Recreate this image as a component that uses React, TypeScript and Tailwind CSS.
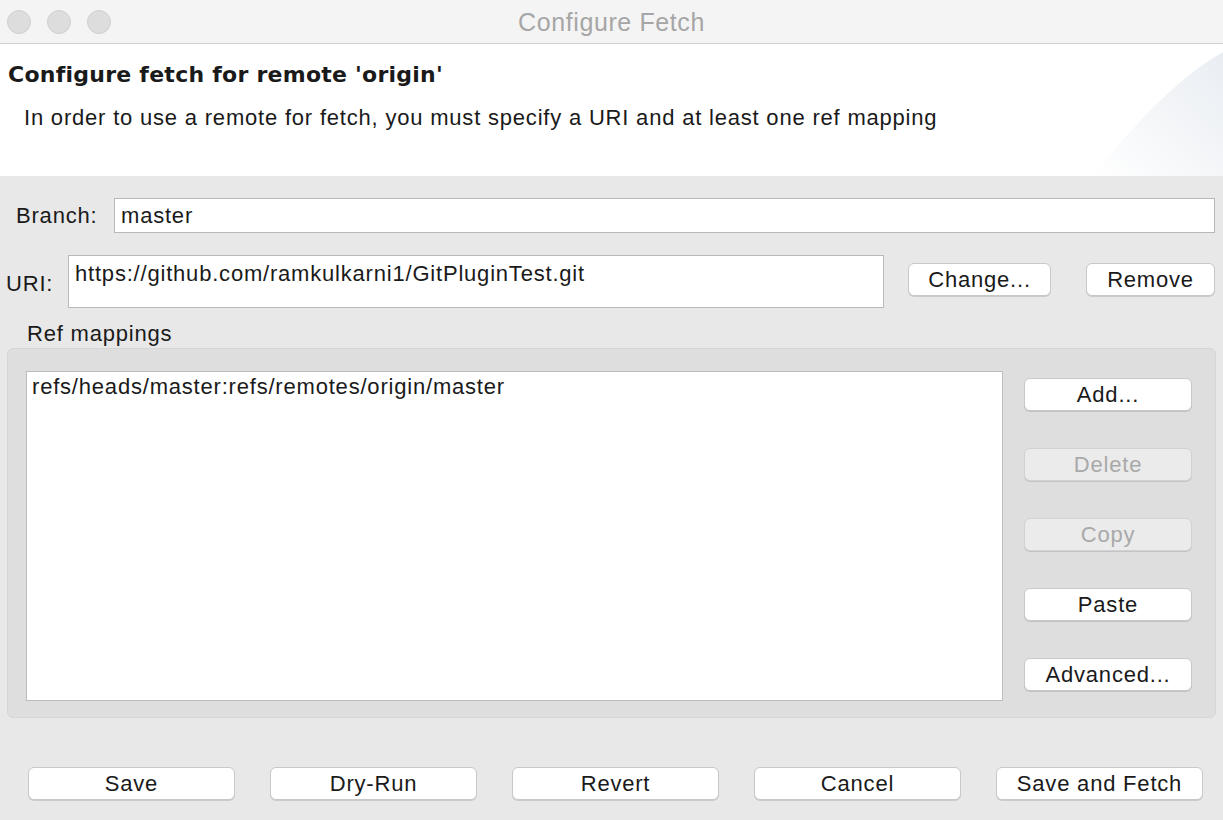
import React from 'react';

const font = { fontFamily: '"Liberation Sans", Arial, sans-serif' };

function MacButton({ label, disabled, className = '' }: { label: string; disabled?: boolean; className?: string }) {
  return (
    <button
      className={`h-[33px] rounded-[6px] border text-[22px] tracking-[0.8px] leading-none flex items-center justify-center shadow-[0_1px_0_rgba(0,0,0,0.12)] ${
        disabled
          ? 'border-[#d2d2d2] bg-[#ebebeb] text-[#a9a9a9]'
          : 'border-[#c8c8c8] bg-white text-[#1a1a1a]'
      } ${className}`}
    >
      {label}
    </button>
  );
}

export default function App() {
  return (
    <div className="w-[1223px] h-[820px] overflow-hidden bg-[#e8e8e8] text-[#1a1a1a] text-[22px] tracking-[0.8px]" style={font}>
      {/* title bar */}
      <div className="relative h-[44px] bg-[#f4f4f4] border-b border-[#cfcfcf] flex items-center justify-center">
        <div className="absolute left-[7px] top-[10px] flex gap-[16px]">
          <span className="w-[24px] h-[24px] rounded-full bg-[#dddddd] border border-[#d0d0d0]" />
          <span className="w-[24px] h-[24px] rounded-full bg-[#dddddd] border border-[#d0d0d0]" />
          <span className="w-[24px] h-[24px] rounded-full bg-[#dddddd] border border-[#d0d0d0]" />
        </div>
        <span className="text-[25px] tracking-[0.6px] text-[#a6a6a6] mt-[2px]">Configure Fetch</span>
      </div>

      {/* header */}
      <div className="relative h-[132px] bg-white overflow-hidden">
        <svg className="absolute right-0 top-0" width="130" height="132" viewBox="0 0 130 132">
          <defs>
            <linearGradient id="g" x1="0" y1="1" x2="1" y2="0">
              <stop offset="0" stopColor="#ffffff" />
              <stop offset="1" stopColor="#e9edf2" />
            </linearGradient>
          </defs>
          <path d="M0 132 C 40 80, 90 30, 130 8 L130 132 Z" fill="url(#g)" />
        </svg>
        <div
          className="relative pl-[8px] pt-[18px] text-[22px] tracking-[0.25px] font-bold leading-[26px]"
          style={{ fontFamily: '"DejaVu Sans", Verdana, sans-serif' }}
        >
          Configure fetch for remote 'origin'
        </div>
        <div className="relative pl-[24px] pt-[18px] leading-[24px]">
          In order to use a remote for fetch, you must specify a URI and at least one ref mapping
        </div>
      </div>

      {/* body */}
      <div className="pt-[22px]">
        <div className="flex items-center pl-[16px] pr-[8px]">
          <span className="w-[98px]">Branch:</span>
          <div className="flex-1 h-[35px] bg-white border border-[#b9b9b9] flex items-center pl-[6px]">
            master
          </div>
        </div>

        <div className="flex items-start mt-[22px] pl-[6px] pr-[8px]">
          <span className="w-[62px] mt-[12px]">URI:</span>
          <div className="w-[816px] h-[53px] bg-white border border-[#b9b9b9] pl-[6px] pt-[6px] leading-[24px]">
            https://github.com/ramkulkarni1/GitPluginTest.git
          </div>
          <MacButton label="Change..." className="w-[143px] ml-[24px] mt-[8px]" />
          <MacButton label="Remove" className="w-[129px] ml-[35px] mt-[8px]" />
        </div>

        <div className="pl-[27px] mt-[14px] leading-[24px]">Ref mappings</div>

        <div className="mx-[7px] mt-[2px] h-[370px] rounded-[6px] bg-[#dedede] border border-[#d6d6d6] flex pl-[18px] pt-[22px] pb-[16px]">
          <div className="w-[977px] h-[330px] bg-white border border-[#bdbdbd] pl-[5px] pt-[3px] leading-[24px]">
            refs/heads/master:refs/remotes/origin/master
          </div>
          <div className="ml-[21px] flex flex-col gap-[37px] pt-[7px]">
            <MacButton label="Add..." className="w-[168px]" />
            <MacButton label="Delete" disabled className="w-[168px]" />
            <MacButton label="Copy" disabled className="w-[168px]" />
            <MacButton label="Paste" className="w-[168px]" />
            <MacButton label="Advanced..." className="w-[168px]" />
          </div>
        </div>

        <div className="flex gap-[35px] pl-[28px] mt-[49px]">
          {['Save', 'Dry-Run', 'Revert', 'Cancel', 'Save and Fetch'].map((l) => (
            <MacButton key={l} label={l} className="w-[207px]" />
          ))}
        </div>
      </div>
    </div>
  );
}
